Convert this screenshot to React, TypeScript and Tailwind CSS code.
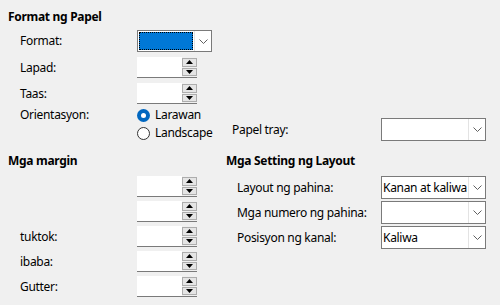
import React from "react";

function Chevron() {
  return (
    <svg width="9" height="5" viewBox="0 0 9 5" className="text-[#606060]">
      <path d="M0.5 0.5 L4.5 4.5 L8.5 0.5" fill="none" stroke="currentColor" strokeWidth="1" />
    </svg>
  );
}

function Combo({ value, width = "w-[105px]", focused = false }: { value?: string; width?: string; focused?: boolean }) {
  return (
    <div className={`flex h-full ${width} border border-[#7a7a7a] bg-white`}>
      {focused ? (
        <div className="m-[1px] flex-1 border border-dotted border-black bg-[#0078d7]" />
      ) : (
        <div className="flex flex-1 items-center overflow-hidden whitespace-nowrap pl-[1px]">{value}</div>
      )}
      <div className="flex w-[17px] items-center justify-center border-l border-[#e3e3e3]">
        <Chevron />
      </div>
    </div>
  );
}

function Spin() {
  return (
    <div className="flex h-[21px] w-[60px] border-b border-[#7a7a7a]">
      <div className="flex-1 bg-white" />
      <div className="flex w-[15px] flex-col gap-[1px] py-[1px]">
        <div className="flex flex-1 items-center justify-center border border-[#adadad] bg-[#e5e5e5]">
          <svg width="7" height="4" viewBox="0 0 7 4">
            <path d="M0 4 L3.5 0 L7 4 Z" fill="#000" />
          </svg>
        </div>
        <div className="flex flex-1 items-center justify-center border border-[#adadad] bg-[#e5e5e5]">
          <svg width="7" height="4" viewBox="0 0 7 4">
            <path d="M0 0 L3.5 4 L7 0 Z" fill="#000" />
          </svg>
        </div>
      </div>
    </div>
  );
}

function Radio({ checked, label }: { checked?: boolean; label: string }) {
  return (
    <div className="flex h-[16px] items-center gap-[5px]">
      {checked ? (
        <span className="flex h-[13px] w-[13px] items-center justify-center rounded-full bg-[#0067c0]">
          <span className="h-[5px] w-[5px] rounded-full bg-white" />
        </span>
      ) : (
        <span className="h-[13px] w-[13px] rounded-full border border-[#333333] bg-white" />
      )}
      <span>{label}</span>
    </div>
  );
}

function SpinRow({ label }: { label?: string }) {
  return (
    <div className="flex h-[21px] items-center pl-3">
      <span className="w-[117px]">{label}</span>
      <Spin />
    </div>
  );
}

function LayoutRow({ label, value }: { label: string; value?: string }) {
  return (
    <div className="flex h-[23px] items-center pl-[11px]">
      <span className="w-[144px]">{label}</span>
      <Combo value={value} />
    </div>
  );
}

export default function App() {
  return (
    <div className="h-[305px] w-[500px] overflow-hidden bg-[#f0f0f0] pl-2 pt-[9px] text-[12px] leading-[16px] tracking-[-0.3px] text-black [font-family:'Noto_Sans',sans-serif]">
      <h2 className="h-[16px] font-bold">Format ng Papel</h2>

      <div className="mt-[5px] flex h-[22px] items-center pl-3">
        <span className="w-[117px]">Format:</span>
        <Combo width="w-[75px]" focused />
      </div>
      <div className="mt-[5px]">
        <SpinRow label="Lapad:" />
      </div>
      <div className="mt-[5px]">
        <SpinRow label="Taas:" />
      </div>

      <div className="mt-[3px] flex items-end pl-3">
        <span className="w-[117px] self-start">Orientasyon:</span>
        <div className="flex w-[95px] flex-col gap-[2px]">
          <Radio checked label="Larawan" />
          <Radio label="Landscape" />
        </div>
        <div className="flex h-[23px] items-center">
          <span className="w-[149px]">Papel tray:</span>
          <Combo />
        </div>
      </div>

      <div className="mt-[12px] flex">
        <div className="w-[218px]">
          <h2 className="h-[16px] font-bold">Mga margin</h2>
          <div className="mt-[7px] flex flex-col gap-[4px]">
            <SpinRow />
            <SpinRow />
            <SpinRow label="tuktok:" />
            <SpinRow label="ibaba:" />
            <SpinRow label="Gutter:" />
          </div>
        </div>
        <div>
          <h2 className="h-[16px] font-bold">Mga Setting ng Layout</h2>
          <div className="mt-[7px] flex flex-col gap-[2px]">
            <LayoutRow label="Layout ng pahina:" value="Kanan at kaliwa" />
            <LayoutRow label="Mga numero ng pahina:" />
            <LayoutRow label="Posisyon ng kanal:" value="Kaliwa" />
          </div>
        </div>
      </div>
    </div>
  );
}
